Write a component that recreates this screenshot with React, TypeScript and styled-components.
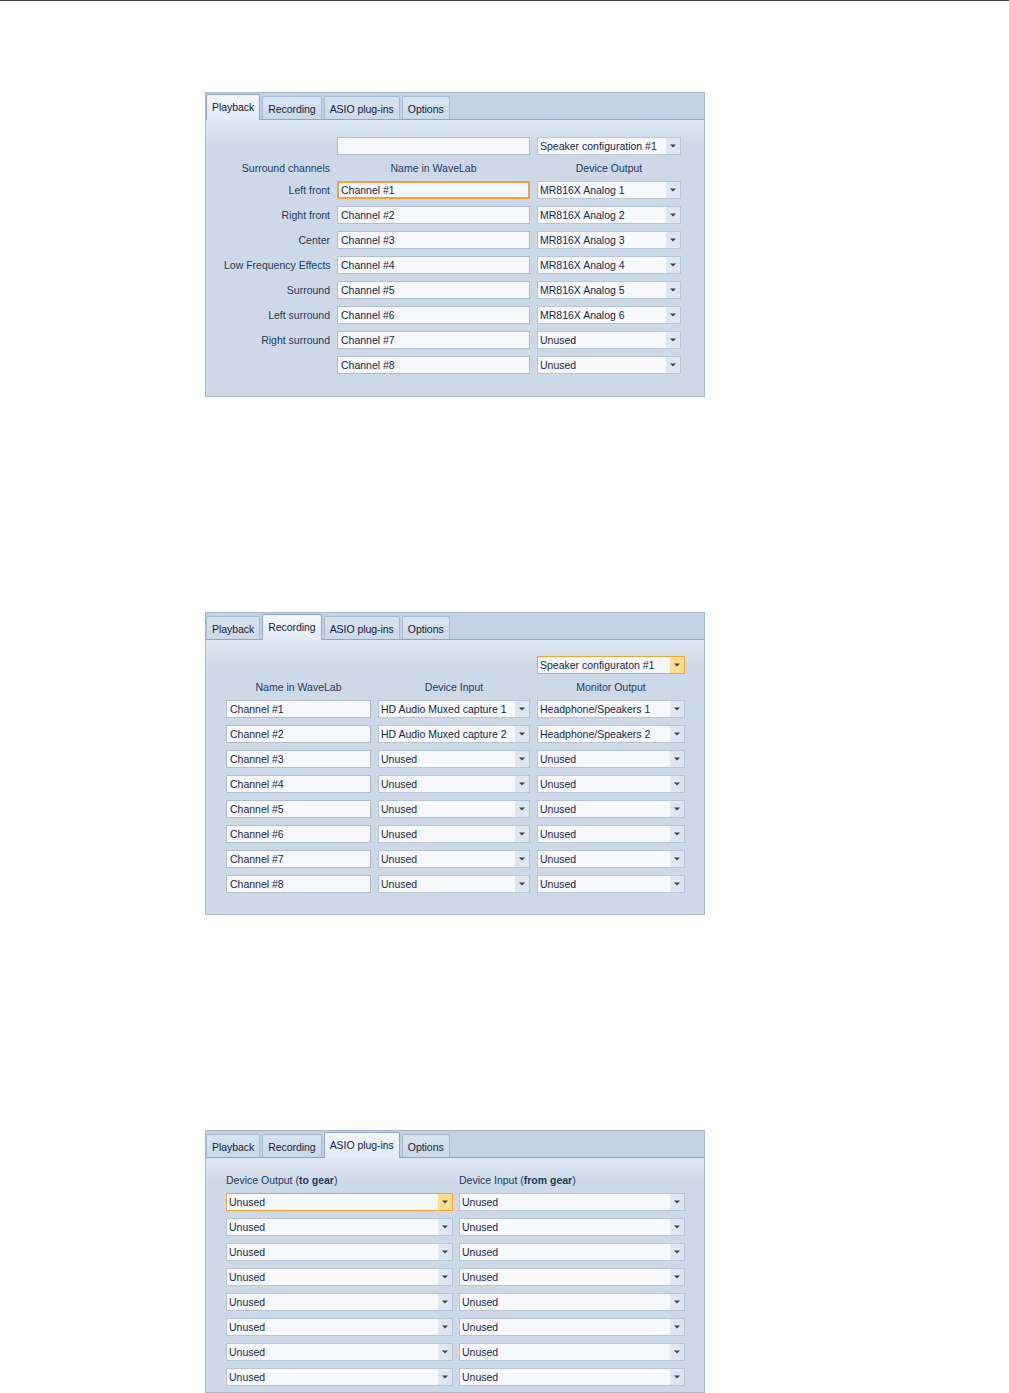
import React from "react";
import styled, { createGlobalStyle, css } from "styled-components";

const GlobalStyle = createGlobalStyle`
  html, body { margin: 0; padding: 0; background: #ffffff; }
  body { font-family: "Liberation Sans", Arial, sans-serif; font-size: 10.5px; color: #1e395b; }
  * { box-sizing: border-box; }
`;

const TopRule = styled.div`
  height: 1px;
  background: #474747;
`;

const Page = styled.div`
  display: flex;
  flex-direction: column;
  gap: 215px;
  padding: 91px 0 0 205px;
`;

const Panel = styled.div`
  width: 500px;
  border: 1px solid #a7b9d0;
  background: #cdd9e7;
`;

const TabStrip = styled.div`
  display: flex;
  align-items: flex-end;
  gap: 2px;
  height: 27px;
  padding-top: 1px;
  background: #c2d2e4;
  border-bottom: 1px solid #8aa5ca;
`;

const Tab = styled.div<{ $active?: boolean }>`
  display: flex;
  align-items: center;
  justify-content: center;
  padding: 1px 5px 0;
  height: 23px;
  border: 1px solid #a6b9d2;
  border-bottom: none;
  border-radius: 2px 2px 0 0;
  background: linear-gradient(#d9e4f0, #cad8e8);
  color: #15243a;
  font-size: 10.5px;
  letter-spacing: -0.05px;
  ${(p) =>
    p.$active &&
    css`
      height: 26px;
      margin-bottom: -1px;
      position: relative;
      padding-top: 0;
      padding-bottom: 2px;
      border-color: #8ea7c8;
      background: linear-gradient(#f3f7fb, #e2eaf4);
    `}
`;

const Content = styled.div<{ $top: number; $bottom: number; $left: number }>`
  padding: ${(p) => `${p.$top}px 0 ${p.$bottom}px ${p.$left}px`};
  background: linear-gradient(#dfe8f2, #cdd9e7 26px, #cdd9e7);
`;

const Grid = styled.div<{ $cols: string; $gap?: number }>`
  display: grid;
  grid-template-columns: ${(p) => p.$cols};
  column-gap: ${(p) => p.$gap ?? 7}px;
  row-gap: 7px;
  align-items: center;
`;

const Label = styled.div`
  text-align: right;
  color: #1e395b;
  white-space: nowrap;
  line-height: 18px;
  height: 18px;
`;

const Header = styled.div<{ $align?: "left" | "center" | "right" }>`
  text-align: ${(p) => p.$align || "center"};
  line-height: 12px;
  height: 12px;
  color: #1e395b;
  white-space: nowrap;
  b { font-weight: 700; }
`;

const TextBox = styled.div<{ $focus?: boolean }>`
  height: 18px;
  border: 1px solid #aebdd1;
  background: #f6f8fb;
  color: #17284a;
  padding: 0 3px;
  line-height: 16px;
  white-space: nowrap;
  overflow: hidden;
  ${(p) =>
    p.$focus &&
    css`
      border: 2px solid #f5a23e;
      padding: 0 2px;
      line-height: 14px;
    `}
`;

const Dropdown = styled.div<{ $hot?: boolean }>`
  display: flex;
  height: 18px;
  border: 1px solid #b6c5d8;
  background: #f6f8fb;
  ${(p) =>
    p.$hot &&
    css`
      border-color: #f3a33c;
    `}
`;

const DropValue = styled.div`
  flex: 1;
  padding-left: 2px;
  line-height: 16px;
  color: #17284a;
  white-space: nowrap;
  overflow: hidden;
`;

const DropArrow = styled.div<{ $hot?: boolean }>`
  width: 14px;
  display: flex;
  align-items: center;
  justify-content: center;
  background: ${(p) => (p.$hot ? "#fddf8b" : "#dde6f1")};
`;

const Select = ({ value, hot }: { value: string; hot?: boolean }) => (
  <Dropdown $hot={hot}>
    <DropValue>{value}</DropValue>
    <DropArrow $hot={hot}>
      <svg width="6" height="4" viewBox="0 0 6 4">
        <path d="M0 0.5 H6 L3 3.5 Z" fill="#404040" />
      </svg>
    </DropArrow>
  </Dropdown>
);

const Tabs = ({ active }: { active: number }) => (
  <TabStrip>
    {["Playback", "Recording", "ASIO plug-ins", "Options"].map((t, i) => (
      <Tab key={t} $active={i === active}>
        {t}
      </Tab>
    ))}
  </TabStrip>
);

const Empty = styled.div``;

const playbackRows = [
  ["Left front", "Channel #1", "MR816X Analog 1"],
  ["Right front", "Channel #2", "MR816X Analog 2"],
  ["Center", "Channel #3", "MR816X Analog 3"],
  ["Low Frequency Effects", "Channel #4", "MR816X Analog 4"],
  ["Surround", "Channel #5", "MR816X Analog 5"],
  ["Left surround", "Channel #6", "MR816X Analog 6"],
  ["Right surround", "Channel #7", "Unused"],
  ["", "Channel #8", "Unused"],
];

const recRows = Array.from({ length: 8 }, (_, i) => [
  `Channel #${i + 1}`,
  i === 0 ? "HD Audio Muxed capture 1" : i === 1 ? "HD Audio Muxed capture 2" : "Unused",
  i === 0 ? "Headphone/Speakers 1" : i === 1 ? "Headphone/Speakers 2" : "Unused",
]);

export default function App() {
  return (
    <>
      <GlobalStyle />
      <TopRule />
      <Page>
        <Panel>
          <Tabs active={0} />
          <Content $top={17} $bottom={22} $left={18}>
            <Grid $cols="106px 193px 144px">
              <Empty />
              <TextBox />
              <Select value="Speaker configuration #1" />
              <Header $align="right">Surround channels</Header>
              <Header>Name in WaveLab</Header>
              <Header>Device Output</Header>
              {playbackRows.map(([l, n, d], i) => (
                <React.Fragment key={i}>
                  <Label>{l}</Label>
                  <TextBox $focus={i === 0}>{n}</TextBox>
                  <Select value={d} />
                </React.Fragment>
              ))}
            </Grid>
          </Content>
        </Panel>

        <Panel>
          <Tabs active={1} />
          <Content $top={16} $bottom={21} $left={20}>
            <Grid $cols="145px 152px 148px">
              <Empty />
              <Empty />
              <Select value="Speaker configuraton #1" hot />
              <Header>Name in WaveLab</Header>
              <Header>Device Input</Header>
              <Header>Monitor Output</Header>
              {recRows.map(([n, a, b], i) => (
                <React.Fragment key={i}>
                  <TextBox>{n}</TextBox>
                  <Select value={a} />
                  <Select value={b} />
                </React.Fragment>
              ))}
            </Grid>
          </Content>
        </Panel>

        <Panel>
          <Tabs active={2} />
          <Content $top={16} $bottom={6} $left={20}>
            <Grid $cols="227px 226px" $gap={6}>
              <Header $align="left">
                Device Output (<b>to gear</b>)
              </Header>
              <Header $align="left">
                Device Input (<b>from gear</b>)
              </Header>
              {Array.from({ length: 8 }, (_, i) => (
                <React.Fragment key={i}>
                  <Select value="Unused" hot={i === 0} />
                  <Select value="Unused" />
                </React.Fragment>
              ))}
            </Grid>
          </Content>
        </Panel>
      </Page>
    </>
  );
}
